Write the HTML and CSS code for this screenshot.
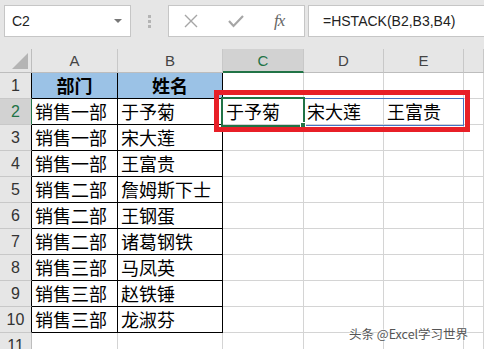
FILE: index.html
```html
<!DOCTYPE html>
<html lang="zh-CN">
<head>
    <meta charset="UTF-8">
    <title>HSTACK</title>
    <link rel="stylesheet" href="styles.css">
</head>
<body>
    <div class="toolbar">
        <div class="name-box">
            <span>C2</span>
            <span class="caret"></span>
        </div>
        <div class="grip"><i></i><i></i><i></i></div>
        <div class="fx-buttons">
            <svg width="14" height="14" viewBox="0 0 14 14"><path d="M1 1L13 13M13 1L1 13" stroke="#a6a6a6" stroke-width="1.4" fill="none"/></svg>
            <svg width="16" height="14" viewBox="0 0 16 14"><path d="M1 7L5.5 12L15 2" stroke="#a6a6a6" stroke-width="2.2" fill="none"/></svg>
            <span class="fx">fx</span>
        </div>
        <div class="formula">=HSTACK(B2,B3,B4)</div>
    </div>

    <div class="sheet">
        <div class="corner"><span></span></div>
        <div class="col-head">A</div>
        <div class="col-head">B</div>
        <div class="col-head active">C</div>
        <div class="col-head">D</div>
        <div class="col-head">E</div>
        <div class="col-head"></div>

        <div class="row-head bk">1</div>
        <div class="cell bk title">部门</div>
        <div class="cell bk title">姓名</div>
        <div class="cell"></div><div class="cell"></div><div class="cell"></div><div class="cell"></div>

        <div class="row-head bk active">2</div>
        <div class="cell bk">销售一部</div>
        <div class="cell bk">于予菊</div>
        <div class="cell">于予菊</div><div class="cell">宋大莲</div><div class="cell">王富贵</div><div class="cell"></div>

        <div class="row-head bk">3</div>
        <div class="cell bk">销售一部</div>
        <div class="cell bk">宋大莲</div>
        <div class="cell"></div><div class="cell"></div><div class="cell"></div><div class="cell"></div>

        <div class="row-head bk">4</div>
        <div class="cell bk">销售一部</div>
        <div class="cell bk">王富贵</div>
        <div class="cell"></div><div class="cell"></div><div class="cell"></div><div class="cell"></div>

        <div class="row-head bk">5</div>
        <div class="cell bk">销售二部</div>
        <div class="cell bk">詹姆斯下士</div>
        <div class="cell"></div><div class="cell"></div><div class="cell"></div><div class="cell"></div>

        <div class="row-head bk">6</div>
        <div class="cell bk">销售二部</div>
        <div class="cell bk">王钢蛋</div>
        <div class="cell"></div><div class="cell"></div><div class="cell"></div><div class="cell"></div>

        <div class="row-head bk">7</div>
        <div class="cell bk">销售二部</div>
        <div class="cell bk">诸葛钢铁</div>
        <div class="cell"></div><div class="cell"></div><div class="cell"></div><div class="cell"></div>

        <div class="row-head bk">8</div>
        <div class="cell bk">销售三部</div>
        <div class="cell bk">马凤英</div>
        <div class="cell"></div><div class="cell"></div><div class="cell"></div><div class="cell"></div>

        <div class="row-head bk">9</div>
        <div class="cell bk">销售三部</div>
        <div class="cell bk">赵铁锤</div>
        <div class="cell"></div><div class="cell"></div><div class="cell"></div><div class="cell"></div>

        <div class="row-head bk">10</div>
        <div class="cell bk">销售三部</div>
        <div class="cell bk">龙淑芬</div>
        <div class="cell"></div><div class="cell"></div><div class="cell"></div><div class="cell"></div>

        <div class="row-head">11</div>
        <div class="cell"></div><div class="cell"></div><div class="cell"></div><div class="cell"></div><div class="cell"></div><div class="cell"></div>
    </div>

    <!-- overlays -->
    <div class="spill"></div>
    <div class="selection"><span class="handle"></span></div>
    <div class="highlight"></div>
    <div class="watermark">头条 @Excel学习世界</div>
</body>
</html>
```

FILE: styles.css
```css
/* Page */
body {
    margin: 0;
    width: 484px;
    height: 349px;
    overflow: hidden;
    position: relative;
    background: #fff;
    font-family: 'Liberation Sans', 'Noto Sans CJK SC', sans-serif;
}

/* Formula bar */
.toolbar {
    height: 49px;
    background: #e6e6e6;
    display: flex;
    align-items: flex-start;
    padding-top: 5px;
    box-sizing: border-box;
}

.name-box {
    margin-left: 4px;
    width: 127px;
    height: 32px;
    box-sizing: border-box;
    background: #fff;
    border: 1px solid #c6c6c6;
    display: flex;
    align-items: center;
    justify-content: space-between;
    padding: 0 8px 0 7px;
    font-size: 14px;
    color: #222;
}

.caret {
    width: 0;
    height: 0;
    border-left: 4px solid transparent;
    border-right: 4px solid transparent;
    border-top: 4px solid #777;
}

.grip {
    width: 37px;
    height: 32px;
    display: flex;
    flex-direction: column;
    align-items: center;
    justify-content: center;
    gap: 2px;
}

.grip i {
    width: 3px;
    height: 3px;
    background: #b4b4b4;
}

.fx-buttons {
    width: 137px;
    height: 32px;
    box-sizing: border-box;
    background: #fff;
    border: 1px solid #c6c6c6;
    display: flex;
    align-items: center;
    gap: 30px;
    padding-left: 15px;
}

.fx {
    font-family: 'Liberation Serif', serif;
    font-style: italic;
    font-size: 17px;
    color: #666;
    letter-spacing: -1px;
}

.formula {
    margin-left: 3px;
    flex: 1;
    height: 32px;
    box-sizing: border-box;
    background: #fff;
    border: 1px solid #c6c6c6;
    border-right: none;
    padding-left: 14px;
    font-size: 14px;
    line-height: 30px;
    color: #222;
}

/* Sheet grid */
.sheet {
    display: grid;
    grid-template-columns: 32px 86px 105px 81px 80px 80px 1fr;
    grid-template-rows: 24px repeat(11, 26px);
}

.sheet > div {
    box-sizing: border-box;
    border-right: 1px solid #d4d4d4;
    border-bottom: 1px solid #d4d4d4;
}

.corner {
    background: #e6e6e6;
    border-right-color: #bdbdbd !important;
    border-bottom-color: #bdbdbd !important;
    position: relative;
}

.corner span {
    position: absolute;
    right: 3px;
    bottom: 3px;
    width: 0;
    height: 0;
    border-left: 16px solid transparent;
    border-bottom: 16px solid #b4b4b4;
}

.col-head {
    background: #e6e6e6;
    border-right-color: #c8c8c8 !important;
    border-bottom-color: #bdbdbd !important;
    text-align: center;
    font-size: 15px;
    line-height: 24px;
    color: #444;
}

.col-head.active {
    background: #d2d2d2;
    color: #217346;
    border-bottom: 2px solid #217346 !important;
}

.row-head {
    background: #e6e6e6;
    border-right-color: #bdbdbd !important;
    border-bottom-color: #c8c8c8 !important;
    text-align: center;
    font-size: 16px;
    line-height: 26px;
    color: #333;
}

.row-head.bk {
    border-right-color: #000 !important;
}

.row-head.active {
    background: #d2d2d2;
    color: #217346;
    border-right: 1px solid #217346 !important;
}

.cell {
    font-family: 'Noto Sans CJK SC', sans-serif;
    font-size: 18px;
    line-height: 25px;
    padding-left: 3px;
    color: #000;
    white-space: nowrap;
}

.cell.bk {
    border-right-color: #000;
    border-bottom-color: #000;
}

.cell.title {
    background: #9bc2e6;
    font-weight: bold;
    text-align: center;
    padding-left: 0;
}

/* Overlays */
.spill {
    position: absolute;
    left: 222px;
    top: 98px;
    width: 242px;
    height: 28px;
    box-sizing: border-box;
    border: 1px solid #4472c4;
}

.selection {
    position: absolute;
    left: 221px;
    top: 97px;
    width: 84px;
    height: 30px;
    box-sizing: border-box;
    border: 2px solid #217346;
}

.handle {
    position: absolute;
    right: -3px;
    bottom: -3px;
    width: 6px;
    height: 6px;
    background: #217346;
    border: 1px solid #fff;
    box-sizing: border-box;
}

.highlight {
    position: absolute;
    left: 214px;
    top: 90px;
    width: 256px;
    height: 42px;
    box-sizing: border-box;
    border: 5px solid #e81f27;
}

.watermark {
    position: absolute;
    left: 349px;
    top: 324px;
    font-family: 'Noto Sans CJK SC', sans-serif;
    font-size: 12.5px;
    color: #555;
    text-shadow: 0 0 2px #fff, 0 0 2px #fff;
}
```
